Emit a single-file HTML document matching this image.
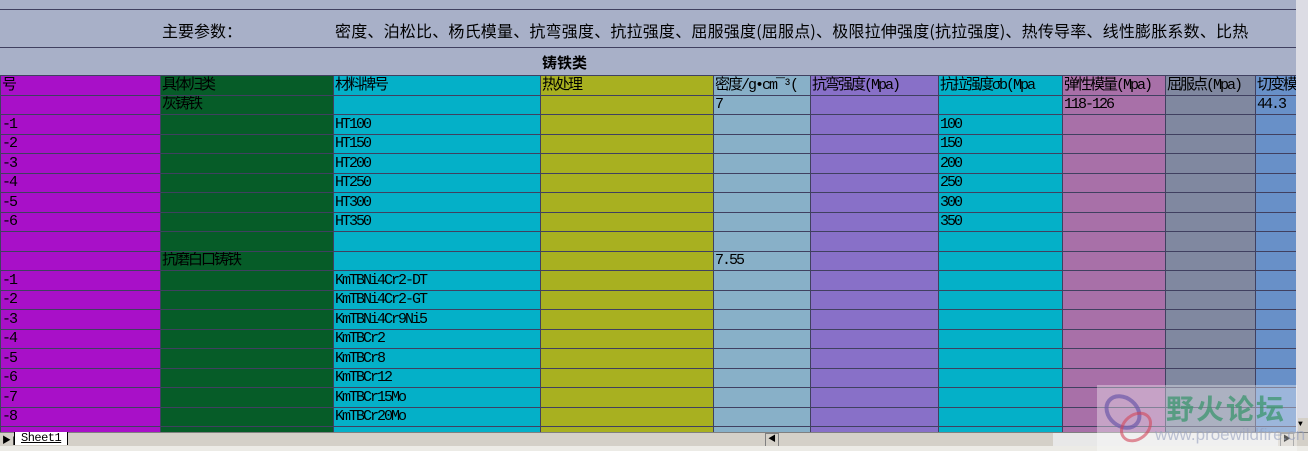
<!DOCTYPE html>
<html><head><meta charset="utf-8"><style>
body{margin:0;width:1308px;height:451px;overflow:hidden;background:#a8b0c8;position:relative;font-family:"Liberation Mono","Noto Sans CJK SC",monospace;font-size:15px;letter-spacing:-2px;color:#000}
.a{position:absolute}
table{position:absolute;left:0;top:75px;border-collapse:collapse;table-layout:fixed;width:1296px}
td{border:1px solid #404060;height:18.5px;padding:0 0 0 1px;white-space:nowrap;overflow:hidden;line-height:18px;vertical-align:bottom}
td:nth-child(1){background:#a810c8}
td:nth-child(2){background:#065c28}
td:nth-child(3){background:#04b0c8}
td:nth-child(4){background:#a8b020}
td:nth-child(5){background:#88b0c8}
td:nth-child(6){background:#8870c8}
td:nth-child(7){background:#04b0c8}
td:nth-child(8){background:#a870a8}
td:nth-child(9){background:#8088a0}
td:nth-child(10){background:#6890c8}
</style></head><body>
<div class="a" style="left:0;top:9px;width:1296px;height:1px;background:#404060"></div>
<div class="a" style="left:0;top:47px;width:1296px;height:1px;background:#404060"></div>
<div class="a" style="left:162px;top:18px;font-size:16px;letter-spacing:0">主要参数：</div>
<div class="a" style="left:335px;top:18px;font-size:16px;letter-spacing:0.2px;font-family:'Noto Sans CJK SC',sans-serif">密度、泊松比、杨氏模量、抗弯强度、抗拉强度、屈服强度(屈服点)、极限拉伸强度(抗拉强度)、热传导率、线性膨胀系数、比热</div>
<div class="a" style="left:542px;top:52px;font-weight:bold;font-size:15px;letter-spacing:0">铸铁类</div>
<table>
<colgroup><col style="width:160px"><col style="width:173px"><col style="width:207px"><col style="width:173px"><col style="width:97px"><col style="width:128px"><col style="width:124px"><col style="width:103px"><col style="width:90px"><col style="width:41px"></colgroup>
<tr><td>号</td><td>具体归类</td><td>材料牌号</td><td>热处理</td><td>密度/g•cm¯³(</td><td>抗弯强度(Mpa)</td><td>抗拉强度σb(Mpa</td><td>弹性模量(Mpa)</td><td>屈服点(Mpa)</td><td>切变模</td></tr>
<tr><td></td><td>灰铸铁</td><td></td><td></td><td>7</td><td></td><td></td><td>118-126</td><td></td><td>44.3</td></tr>
<tr><td>-1</td><td></td><td>HT100</td><td></td><td></td><td></td><td>100</td><td></td><td></td><td></td></tr>
<tr><td>-2</td><td></td><td>HT150</td><td></td><td></td><td></td><td>150</td><td></td><td></td><td></td></tr>
<tr><td>-3</td><td></td><td>HT200</td><td></td><td></td><td></td><td>200</td><td></td><td></td><td></td></tr>
<tr><td>-4</td><td></td><td>HT250</td><td></td><td></td><td></td><td>250</td><td></td><td></td><td></td></tr>
<tr><td>-5</td><td></td><td>HT300</td><td></td><td></td><td></td><td>300</td><td></td><td></td><td></td></tr>
<tr><td>-6</td><td></td><td>HT350</td><td></td><td></td><td></td><td>350</td><td></td><td></td><td></td></tr>
<tr><td></td><td></td><td></td><td></td><td></td><td></td><td></td><td></td><td></td><td></td></tr>
<tr><td></td><td>抗磨白口铸铁</td><td></td><td></td><td>7.55</td><td></td><td></td><td></td><td></td><td></td></tr>
<tr><td>-1</td><td></td><td>KmTBNi4Cr2-DT</td><td></td><td></td><td></td><td></td><td></td><td></td><td></td></tr>
<tr><td>-2</td><td></td><td>KmTBNi4Cr2-GT</td><td></td><td></td><td></td><td></td><td></td><td></td><td></td></tr>
<tr><td>-3</td><td></td><td>KmTBNi4Cr9Ni5</td><td></td><td></td><td></td><td></td><td></td><td></td><td></td></tr>
<tr><td>-4</td><td></td><td>KmTBCr2</td><td></td><td></td><td></td><td></td><td></td><td></td><td></td></tr>
<tr><td>-5</td><td></td><td>KmTBCr8</td><td></td><td></td><td></td><td></td><td></td><td></td><td></td></tr>
<tr><td>-6</td><td></td><td>KmTBCr12</td><td></td><td></td><td></td><td></td><td></td><td></td><td></td></tr>
<tr><td>-7</td><td></td><td>KmTBCr15Mo</td><td></td><td></td><td></td><td></td><td></td><td></td><td></td></tr>
<tr><td>-8</td><td></td><td>KmTBCr20Mo</td><td></td><td></td><td></td><td></td><td></td><td></td><td></td></tr>
<tr><td></td><td></td><td></td><td></td><td></td><td></td><td></td><td></td><td></td><td></td></tr>
</table>
<div class="a" style="left:1296px;top:0;width:12px;height:451px;background:#dcdce4"></div>
<div class="a" style="left:1298px;top:418px;width:10px;height:14px;background:#d4d0c8;font-size:8px;line-height:14px;letter-spacing:0">▼</div>
<div class="a" style="left:0;top:432px;width:1308px;height:14px;background:#d4d0c8;border-top:1px solid #808080"></div>
<div class="a" style="left:2px;top:433px;font-size:9px;letter-spacing:0">▶|</div>
<div class="a" style="left:14px;top:432px;height:13px;padding:0 6px;background:#fff;font-size:12px;line-height:13px;letter-spacing:-0.5px;text-decoration:underline;border-left:1px solid #000;border-right:1px solid #000">Sheet1</div>
<div class="a" style="left:765px;top:433px;width:12px;height:12px;background:#d4d0c8;border:1px solid #808080;font-size:8px;line-height:12px;text-align:center;letter-spacing:0">◀</div>
<div class="a" style="left:1053px;top:433px;width:225px;height:13px;background:#e8e8e8"></div>
<div class="a" style="left:1280px;top:433px;width:12px;height:12px;background:#d4d0c8;border:1px solid #808080;font-size:8px;line-height:12px;text-align:center;letter-spacing:0">▶</div>
<div class="a" style="left:0;top:446px;width:1308px;height:5px;background:#ecebe6"></div>
<div class="a" style="left:1097px;top:385px;width:200px;height:66px;background:rgba(255,255,255,0.35)"></div>
<div class="a" style="left:1166px;top:388px;font-size:28px;letter-spacing:2px;color:rgba(60,150,110,0.75);font-weight:bold;font-family:'Noto Sans CJK SC',sans-serif">野火论坛</div>
<div class="a" style="left:1155px;top:425px;font-size:17px;color:rgba(150,160,190,0.6);font-family:'Liberation Sans',sans-serif;letter-spacing:0">www.proewildfire.cn</div>
<svg class="a" style="left:1098px;top:385px" width="70" height="66"><ellipse cx="25" cy="27" rx="18" ry="14" transform="rotate(40 25 27)" fill="none" stroke="rgba(110,90,170,0.7)" stroke-width="4"/><ellipse cx="38" cy="42" rx="16" ry="12" transform="rotate(-40 38 42)" fill="none" stroke="rgba(210,70,90,0.6)" stroke-width="3"/></svg>
</body></html>
